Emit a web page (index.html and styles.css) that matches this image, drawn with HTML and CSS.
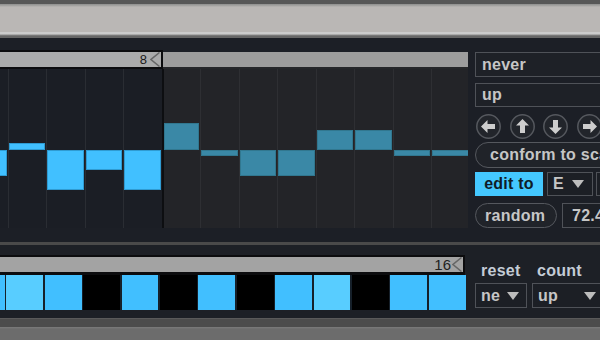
FILE: index.html
```html
<!DOCTYPE html>
<html lang="en">
<head>
    <meta charset="UTF-8">
    <meta name="viewport" content="width=device-width, initial-scale=1.0">
    <title>Step Sequencer</title>
    <link rel="stylesheet" href="styles.css">
</head>
<body>
    <div class="device">
        <div class="topbar"></div>

        <!-- Pitch editor -->
        <div class="editor">
            <div class="seq">
                <div class="ruler">
                    <div class="loop">
                        <span class="num">8</span>
                        <svg class="marker" width="10" height="15" viewBox="0 0 10 15"><polyline points="9.5,0.5 1,7.5 9.5,14.5" fill="none" stroke="#666" stroke-width="1.5"/></svg>
                    </div>
                    <div class="ruler-rest"></div>
                </div>
                <div class="grid">
                    <div class="steps">
                        <div class="step in"><div class="bar" style="margin-top:81px;height:26px"></div></div>
                        <div class="step in"><div class="bar" style="margin-top:74px;height:7px"></div></div>
                        <div class="step in"><div class="bar" style="margin-top:81px;height:40px"></div></div>
                        <div class="step in"><div class="bar" style="margin-top:81px;height:20px"></div></div>
                        <div class="step in"><div class="bar" style="margin-top:81px;height:40px"></div></div>
                        <div class="step out first"><div class="bar dim" style="margin-top:54px;height:27px"></div></div>
                        <div class="step out"><div class="bar dim" style="margin-top:81px;height:6px"></div></div>
                        <div class="step out"><div class="bar dim" style="margin-top:81px;height:26px"></div></div>
                        <div class="step out"><div class="bar dim" style="margin-top:81px;height:26px"></div></div>
                        <div class="step out"><div class="bar dim" style="margin-top:61px;height:20px"></div></div>
                        <div class="step out"><div class="bar dim" style="margin-top:61px;height:20px"></div></div>
                        <div class="step out"><div class="bar dim" style="margin-top:81px;height:6px"></div></div>
                        <div class="step out"><div class="bar dim" style="margin-top:81px;height:6px"></div></div>
                    </div>
                </div>
            </div>

            <div class="side">
                <div class="field f-never">never</div>
                <div class="field f-up">up</div>
                <div class="arrows">
                    <svg class="arrow" width="25" height="25" viewBox="0 0 25 25"><circle cx="12.5" cy="12.5" r="11.7" fill="#22252b" stroke="#55585e" stroke-width="1.5"/><polygon points="5,12.5 11.5,6 11.5,10 19,10 19,15 11.5,15 11.5,19" fill="#cdcdcd"/></svg>
                    <svg class="arrow" width="25" height="25" viewBox="0 0 25 25"><circle cx="12.5" cy="12.5" r="11.7" fill="#22252b" stroke="#55585e" stroke-width="1.5"/><polygon points="5,12.5 11.5,6 11.5,10 19,10 19,15 11.5,15 11.5,19" fill="#cdcdcd" transform="rotate(90 12.5 12.5)"/></svg>
                    <svg class="arrow" width="25" height="25" viewBox="0 0 25 25"><circle cx="12.5" cy="12.5" r="11.7" fill="#22252b" stroke="#55585e" stroke-width="1.5"/><polygon points="5,12.5 11.5,6 11.5,10 19,10 19,15 11.5,15 11.5,19" fill="#cdcdcd" transform="rotate(-90 12.5 12.5)"/></svg>
                    <svg class="arrow" width="25" height="25" viewBox="0 0 25 25"><circle cx="12.5" cy="12.5" r="11.7" fill="#22252b" stroke="#55585e" stroke-width="1.5"/><polygon points="5,12.5 11.5,6 11.5,10 19,10 19,15 11.5,15 11.5,19" fill="#cdcdcd" transform="rotate(180 12.5 12.5)"/></svg>
                </div>
                <div class="pill conform">conform to scale</div>
                <div class="row r-edit">
                    <div class="toggle">edit to</div>
                    <div class="menu m-key"><span>E</span><i class="tri"></i></div>
                    <div class="menu m-scale"><span>ionian</span></div>
                </div>
                <div class="row r-random">
                    <div class="pill random">random</div>
                    <div class="number">72.41</div>
                </div>
            </div>
        </div>

        <div class="divider"></div>

        <!-- Gate row -->
        <div class="lower">
            <div class="seq2">
                <div class="ruler2">
                    <span class="num">16</span>
                    <svg class="marker" width="10" height="15" viewBox="0 0 10 15"><polyline points="9.5,0.5 1,7.5 9.5,14.5" fill="none" stroke="#666" stroke-width="1.5"/></svg>
                </div>
                <div class="cells">
                    <div class="cell on"></div>
                    <div class="cell hi"></div>
                    <div class="cell on"></div>
                    <div class="cell"></div>
                    <div class="cell on"></div>
                    <div class="cell"></div>
                    <div class="cell on"></div>
                    <div class="cell"></div>
                    <div class="cell on"></div>
                    <div class="cell hi"></div>
                    <div class="cell"></div>
                    <div class="cell on"></div>
                    <div class="cell on"></div>
                </div>
            </div>
            <div class="side2">
                <div class="opt">
                    <span class="label">reset</span>
                    <div class="menu m-reset"><span>ne</span><i class="tri"></i></div>
                </div>
                <div class="opt">
                    <span class="label l-count">count</span>
                    <div class="menu m-count"><span>up</span><i class="tri"></i></div>
                </div>
            </div>
        </div>

        <div class="footer"></div>
    </div>
</body>
</html>
```

FILE: styles.css
```css
body {
    margin: 0;
    background: #1c1f26;
    font-family: "Liberation Sans", Arial, sans-serif;
    overflow: hidden;
}

.device {
    width: 600px;
    height: 340px;
    overflow: hidden;
}

.topbar {
    height: 38px;
    background: linear-gradient(#575757 0, #575757 4px, #8e8e8e 4px, #a9a7a5 6px, #bab7b5 7px, #bab7b5 32px, #cbcbcb 32px, #cbcbcb 34px, #8a8a8a 35px, #666 36px, #666 38px);
}

/* ---------- editor ---------- */

.editor {
    height: 204px;
    display: flex;
    background: #1c1f26;
}

.seq {
    width: 468px;
    flex: none;
    padding-top: 12px;
}

.ruler {
    display: flex;
    height: 19px;
}

.loop {
    width: 160px;
    height: 15px;
    background: #ababab;
    border: 2px solid #0c0c0e;
    border-left: none;
    display: flex;
    justify-content: flex-end;
    align-items: center;
    gap: 3px;
    padding-right: 1px;
}

.num {
    font-size: 13px;
    color: #1a1a1a;
    line-height: 15px;
}

.ruler-rest {
    flex: 1;
    height: 15px;
    margin-top: 2px;
    background: #9d9d9d;
    border-bottom: 2px solid #26272a;
}

.grid {
    height: 159px;
    overflow: hidden;
}

.steps {
    display: flex;
    margin-left: -31px;
    height: 100%;
}

.step {
    width: 38.5px;
    flex: none;
    box-sizing: border-box;
    border-left: 1px solid #2a2d33;
}

.step.in {
    background: #1b1e25;
}

.step.out {
    background: #232428;
    border-left-color: #2e2f33;
}

.step.first {
    border-left: 2px solid #0d0e11;
}

.bar {
    margin-right: 1px;
    background: #41c0ff;
    box-shadow: inset 0 0 0 1px #2f9bd2;
}

.bar.dim {
    background: #3a88a6;
    box-shadow: inset 0 0 0 1px #31778f;
}

/* ---------- side panel ---------- */

.side {
    width: 125px;
    flex: none;
    padding: 14px 0 0 7px;
    overflow: hidden;
    color: #c6c6c6;
    font-size: 16px;
    font-weight: bold;
    letter-spacing: 0.25px;
}

.field {
    box-sizing: border-box;
    width: 140px;
    border: 1px solid #4f5258;
    background: #1e2127;
    padding-left: 6px;
    display: flex;
    align-items: center;
}

.f-never {
    height: 25px;
    margin-bottom: 6px;
}

.f-up {
    height: 24px;
    margin-bottom: 7px;
}

.arrows {
    display: flex;
    gap: 8.5px;
    height: 25px;
    margin: 0 0 3px 1px;
}

.arrow {
    flex: none;
}

.pill {
    box-sizing: border-box;
    border: 1px solid #55585e;
    border-radius: 13px;
    background: #202329;
    display: flex;
    align-items: center;
    white-space: nowrap;
}

.conform {
    width: 150px;
    height: 26px;
    padding-left: 14px;
    margin-bottom: 4px;
}

.row {
    display: flex;
    white-space: nowrap;
}

.r-edit {
    height: 24px;
    gap: 4px;
    margin-bottom: 7px;
}

.toggle {
    width: 68px;
    flex: none;
    background: #44c8ff;
    color: #0f1c28;
    display: flex;
    align-items: center;
    justify-content: center;
}

.menu {
    box-sizing: border-box;
    flex: none;
    border: 1px solid #4f5258;
    background: #1c1f25;
    display: flex;
    align-items: center;
    justify-content: space-between;
    padding: 0 7px 0 5px;
}

.tri {
    width: 0;
    height: 0;
    border-left: 6.5px solid transparent;
    border-right: 6.5px solid transparent;
    border-top: 8px solid #bdbdbd;
}

.m-key {
    width: 46px;
    padding-right: 8px;
}

.m-scale {
    width: 60px;
    margin-left: -1px;
}

.r-random {
    height: 25px;
    gap: 5px;
}

.random {
    width: 82px;
    flex: none;
    padding-left: 9px;
    border-radius: 13px;
}

.number {
    box-sizing: border-box;
    width: 60px;
    flex: none;
    border: 1px solid #4f5258;
    background: #1c1f25;
    padding-left: 9px;
    display: flex;
    align-items: center;
}

/* ---------- gates ---------- */

.divider {
    height: 3px;
    background: #4a4a4a;
}

.lower {
    height: 73px;
    display: flex;
    background: #1d2026;
}

.seq2 {
    width: 465px;
    flex: none;
    padding-top: 10px;
}

.ruler2 {
    box-sizing: border-box;
    height: 20px;
    background: #a3a3a3;
    border: 2px solid #0c0c0e;
    border-bottom-width: 3px;
    border-left: none;
    display: flex;
    justify-content: flex-end;
    align-items: center;
    gap: 1px;
    padding-right: 1px;
}

.ruler2 .num {
    font-size: 15px;
    color: #222;
}

.cells {
    display: flex;
    gap: 1.5px;
    height: 35px;
    margin-left: -32px;
    background: #16202a;
}

.cell {
    width: 36.9px;
    flex: none;
    background: #000;
}

.cell.on {
    background: #41bfff;
}

.cell.hi {
    background: #58cdff;
}

.side2 {
    display: flex;
    gap: 5px;
    padding: 17px 0 0 10px;
    overflow: hidden;
    color: #c6c6c6;
    font-size: 16px;
    font-weight: bold;
    letter-spacing: 0.25px;
}

.opt {
    display: flex;
    flex-direction: column;
}

.label {
    line-height: 18px;
    margin: 0 0 3px 6px;
    color: #c4ccd6;
}

.l-count {
    margin-left: 5px;
}

.m-reset {
    width: 52px;
    height: 25px;
}

.m-count {
    width: 69px;
    height: 25px;
    padding-right: 4px;
}

.footer {
    height: 22px;
    background: linear-gradient(#5a5a5a 0, #5a5a5a 1px, #4c4c4c 1px, #4c4c4c 9px, #7c7c7c 9px, #6c6c6c 11px, #6c6c6c 22px);
}
```
